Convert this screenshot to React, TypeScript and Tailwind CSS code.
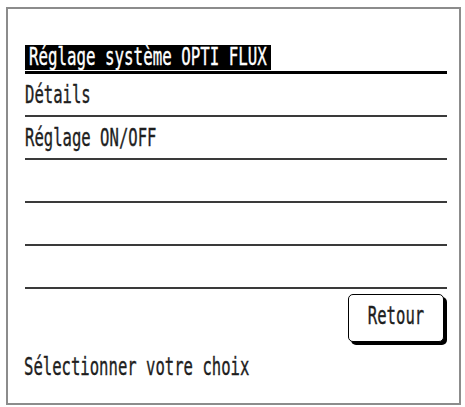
import type { ReactNode } from "react";

function Label({ children, size = "text-[15.6px]" }: { children: ReactNode; size?: string }) {
  return (
    <span
      className={`inline-block origin-center scale-y-[1.55] leading-none whitespace-pre [-webkit-text-stroke:0.25px_currentColor] ${size}`}
    >
      {children}
    </span>
  );
}

function MenuRow({ label }: { label?: string }) {
  return (
    <div className="flex h-[43px] items-end border-b-2 border-[#3a3a3a] pb-[10px]">
      {label && <Label>{label}</Label>}
    </div>
  );
}

export default function App() {
  const rows = ["Détails", "Réglage ON/OFF", "", "", ""];

  return (
    <div className="min-h-[407px] w-[465px] overflow-hidden bg-white pt-[7px] pl-[6px] font-['DejaVu_Sans_Mono','Liberation_Mono',monospace] text-[#1e1e1e]">
      <div className="flex h-[398px] w-[455px] flex-col border-2 border-[#8c8c8c] pt-[22px] pr-[12px] pl-[17px]">
        <div className="flex h-[43px] items-end border-b-[3px] border-black pb-[1px]">
          <div className="flex h-[25px] w-[246px] items-center bg-black pl-[4px] pb-[1px] text-white">
            <Label size="text-[15.8px]">Réglage système OPTI FLUX</Label>
          </div>
        </div>
        {rows.map((label, i) => (
          <MenuRow key={i} label={label} />
        ))}
        <div className="mt-[5px] flex justify-end pr-[3px]">
          <button
            type="button"
            className="flex h-[48px] w-[96px] items-center justify-center rounded-[5px] border-[1.5px] border-black bg-white shadow-[3px_3px_0_#000]"
          >
            <Label>Retour</Label>
          </button>
        </div>
        <div className="mt-[14px] -ml-[1px]">
          <Label>Sélectionner votre choix</Label>
        </div>
      </div>
    </div>
  );
}
